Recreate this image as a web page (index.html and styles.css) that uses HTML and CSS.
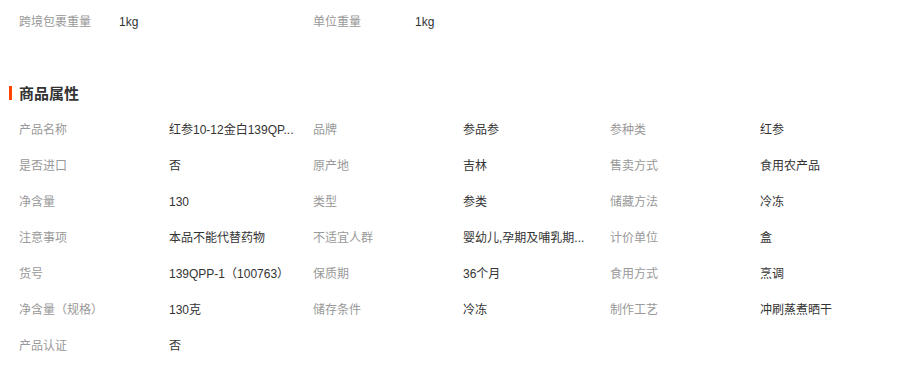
FILE: index.html
```html
<!DOCTYPE html>
<html lang="zh-CN">
<head>
<meta charset="utf-8">
<title>商品属性</title>
<link rel="stylesheet" href="styles.css">
</head>
<body>
<div class="page">
  <div class="pack">
    <div class="pack-item"><span class="pack-label">跨境包裹重量</span><span class="pack-value">1kg</span></div>
    <div class="pack-item"><span class="pack-label">单位重量</span><span class="pack-value">1kg</span></div>
  </div>

  <h2 class="title">商品属性</h2>

  <div class="attrs">
    <div class="attr"><span class="label">产品名称</span><span class="value">红参10-12金白139QP...</span></div>
    <div class="attr"><span class="label">品牌</span><span class="value">参品参</span></div>
    <div class="attr"><span class="label">参种类</span><span class="value">红参</span></div>

    <div class="attr"><span class="label">是否进口</span><span class="value">否</span></div>
    <div class="attr"><span class="label">原产地</span><span class="value">吉林</span></div>
    <div class="attr"><span class="label">售卖方式</span><span class="value">食用农产品</span></div>

    <div class="attr"><span class="label">净含量</span><span class="value">130</span></div>
    <div class="attr"><span class="label">类型</span><span class="value">参类</span></div>
    <div class="attr"><span class="label">储藏方法</span><span class="value">冷冻</span></div>

    <div class="attr"><span class="label">注意事项</span><span class="value">本品不能代替药物</span></div>
    <div class="attr"><span class="label">不适宜人群</span><span class="value">婴幼儿,孕期及哺乳期...</span></div>
    <div class="attr"><span class="label">计价单位</span><span class="value">盒</span></div>

    <div class="attr"><span class="label">货号</span><span class="value">139QPP-1（100763）</span></div>
    <div class="attr"><span class="label">保质期</span><span class="value">36个月</span></div>
    <div class="attr"><span class="label">食用方式</span><span class="value">烹调</span></div>

    <div class="attr"><span class="label">净含量（规格）</span><span class="value">130克</span></div>
    <div class="attr"><span class="label">储存条件</span><span class="value">冷冻</span></div>
    <div class="attr"><span class="label">制作工艺</span><span class="value">冲刷蒸煮晒干</span></div>

    <div class="attr"><span class="label">产品认证</span><span class="value">否</span></div>
  </div>
</div>
</body>
</html>
```

FILE: styles.css
```css
html, body {
  margin: 0;
  padding: 0;
  background: #ffffff;
}

body {
  font-family: "Liberation Sans", "Noto Sans CJK SC", sans-serif;
  font-size: 12px;
  color: #333333;
}

.page {
  width: 897px;
}

.pack {
  display: flex;
  padding-left: 19px;
  height: 44px;
  align-items: center;
}

.pack-item {
  display: flex;
  width: 294px;
  line-height: 20px;
}

.pack-label {
  width: 100px;
  color: #999999;
}

.pack-value {
  color: #333333;
}

.pack-item + .pack-item .pack-label {
  width: 102px;
}

.title {
  display: flex;
  align-items: center;
  margin: 38px 0 0 0;
  padding-left: 9px;
  height: 20px;
  font-size: 15px;
  font-weight: bold;
  color: #333333;
}

.title::before {
  content: "";
  display: block;
  width: 3px;
  height: 14px;
  margin-top: 2px;
  margin-right: 7px;
  background: #ff4400;
}

.attrs {
  margin-top: 10px;
  padding-left: 19px;
  display: grid;
  grid-template-columns: 294px 297px 296px;
}

.attr {
  display: flex;
  height: 36px;
  align-items: center;
  line-height: 20px;
}

.label {
  width: 150px;
  flex: none;
  color: #999999;
}

.value {
  color: #333333;
  white-space: nowrap;
}
```
